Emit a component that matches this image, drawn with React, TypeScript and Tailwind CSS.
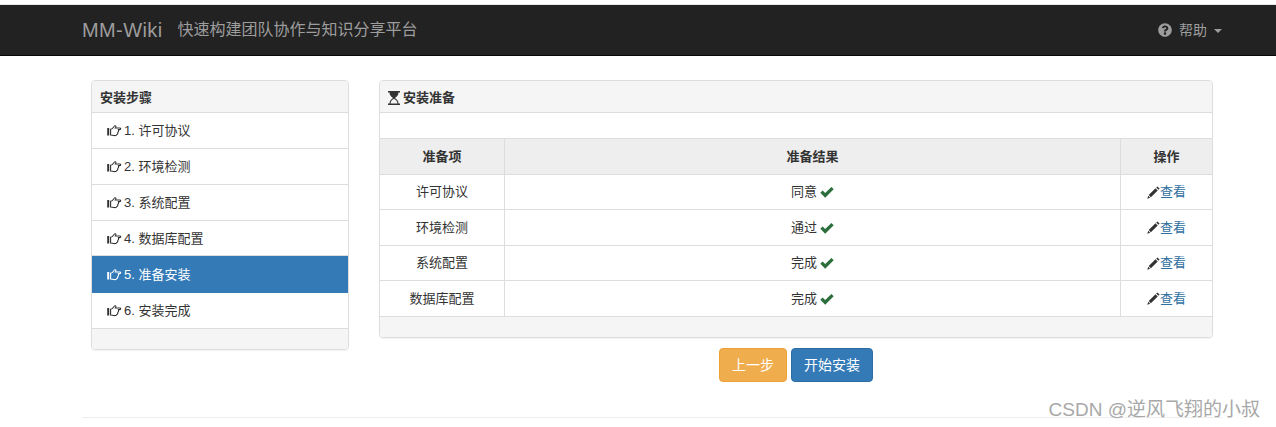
import { FaQuestionCircle } from "react-icons/fa";

const steps = ["1. 许可协议", "2. 环境检测", "3. 系统配置", "4. 数据库配置", "5. 准备安装", "6. 安装完成"];
const rows = [
  ["许可协议", "同意", "h-[35px]"],
  ["环境检测", "通过", "h-[36px]"],
  ["系统配置", "完成", "h-[35px]"],
  ["数据库配置", "完成", "h-[35px]"],
];

function Hourglass() {
  return (
    <svg width="12" height="14" viewBox="0 0 12 14" className="text-[#333]">
      <path fill="currentColor" d="M0 0h12v1.4H0zM0 12.6h12V14H0zM1.5 1.4h9c0 2.8-1.6 4.2-3.6 5.6 2 1.4 3.6 2.8 3.6 5.6H9.4c0-2.2-1.2-3.5-3.4-4.8-2.2 1.3-3.4 2.6-3.4 4.8H1.5c0-2.8 1.6-4.2 3.6-5.6-2-1.4-3.6-2.8-3.6-5.6z" />
    </svg>
  );
}

function Hand() {
  return (
    <svg width="15" height="12" viewBox="0 0 15 12" fill="none" stroke="currentColor" strokeWidth="1.1" className="shrink-0">
      <rect x="0.2" y="3" width="2" height="7.5" fill="currentColor" stroke="none" />
      <path d="M3.6 4.2c1.6 0 2.4-.9 3.1-2.2.5-1 1.3-1.6 1.9-1.1.5.4.3 1.3-.2 2.1h4.4c1.2 0 1.2 1.6 0 1.6h-1.4c.4 1.4-.1 2.4-.6 2.8.2 1-.2 1.7-.9 2-.3.8-1 1.2-2 1.2-1.9 0-3-.6-4.3-.6z" />
    </svg>
  );
}

function Pencil() {
  return (
    <svg width="13" height="13" viewBox="0 0 13 13" className="shrink-0 text-[#333]">
      <path fill="currentColor" d="M10.4 0.4l2.2 2.2-1.2 1.2-2.2-2.2zM8.5 2.3l2.2 2.2-6.8 6.8-2.2-2.2zM1.2 9.8l2 2-2.9.9z" />
    </svg>
  );
}

function Ok() {
  return (
    <svg width="14" height="12" viewBox="0 0 14 12" className="shrink-0 text-[#2c6e3c]">
      <path fill="currentColor" d="M0.3 6.8l2.3-2.3 2.6 2.6L11.4.9l2.3 2.3-8.5 8.5z" />
    </svg>
  );
}

export default function App() {
  return (
    <div className="relative h-[427px] w-[1276px] overflow-hidden bg-white font-['Liberation_Sans','Noto_Sans_CJK_SC',sans-serif] text-[13px] text-[#333]">
      <div className="h-[5px] border-b border-[#e7e7e7]" />
      <nav className="flex h-[51px] items-center border-b border-[#080808] bg-[#222] pl-[82px] pr-[54px] text-[#9d9d9d]">
        <span className="text-[20px] tracking-[0.4px]">MM-Wiki</span>
        <span className="ml-[15px] text-[16px]">快速构建团队协作与知识分享平台</span>
        <div className="ml-auto flex items-center">
          <FaQuestionCircle className="text-[14px]" />
          <span className="ml-[7px] text-[14px]">帮助</span>
          <span className="ml-[7px] mt-[2px] h-0 w-0 border-x-4 border-t-4 border-x-transparent border-t-[#9d9d9d]" />
        </div>
      </nav>

      <div className="flex items-start gap-[30px] pl-[91px] pt-[24px]">
        <section className="w-[258px] overflow-hidden rounded border border-[#ddd] shadow-[0_1px_1px_rgba(0,0,0,0.05)]">
          <h3 className="flex h-[32px] items-center border-b border-[#ddd] bg-[#f5f5f5] pl-2 pt-[2px] font-bold">安装步骤</h3>
          {steps.map((s, i) => (
            <div
              key={s}
              className={
                i === 4
                  ? "flex h-[37px] items-center gap-[2px] bg-[#337ab7] pl-[15px] text-white"
                  : i === 3
                    ? "flex h-[35px] items-center gap-[2px] border-b border-[#ddd] pl-[15px] pt-[1px]"
                    : "flex h-[36px] items-center gap-[2px] border-b border-[#ddd] pl-[15px]"
              }
            >
              <Hand />
              <span>{s}</span>
            </div>
          ))}
          <div className="h-[20px] bg-[#f5f5f5]" />
        </section>

        <div className="w-[834px]">
          <section className="overflow-hidden rounded border border-[#ddd] shadow-[0_1px_1px_rgba(0,0,0,0.05)]">
            <h3 className="flex h-[32px] items-center gap-[3px] border-b border-[#ddd] bg-[#f5f5f5] pl-2 pt-[2px] font-bold">
              <Hourglass />
              安装准备
            </h3>
            <div className="h-[25px]" />
            <div className="grid grid-cols-[125px_616px_1fr] border-y border-[#ddd]">
              {["准备项", "准备结果", "操作"].map((h, i) => (
                <div key={h} className={"flex h-[36px] items-center justify-center border-b border-[#ddd] bg-[#eee] font-bold " + (i < 2 ? "border-r" : "")}>
                  {h}
                </div>
              ))}
              {rows.map(([a, b, h], i) => {
                const line = i < 3 ? "border-b" : "";
                return (
                  <div key={a} className="contents">
                    <div className={"flex items-center justify-center border-r border-[#ddd] " + h + " " + line}>{a}</div>
                    <div className={"flex items-center justify-center gap-[3px] border-r border-[#ddd] " + h + " " + line}>
                      {b}
                      <Ok />
                    </div>
                    <div className={"flex items-center justify-center border-[#ddd] text-[#2f6f9f] " + h + " " + line}>
                      <Pencil />
                      查看
                    </div>
                  </div>
                );
              })}
            </div>
            <div className="h-[20px] bg-[#f5f5f5]" />
          </section>
          <div className="mt-[10px] flex justify-center gap-1">
            <button className="h-[34px] w-[68px] rounded border border-[#eea236] bg-[#f0ad4e] text-[14px] text-white">上一步</button>
            <button className="h-[34px] w-[82px] rounded border border-[#2e6da4] bg-[#337ab7] text-[14px] text-white">开始安装</button>
          </div>
        </div>
      </div>

      <div className="ml-[82px] mt-[35px] w-[1140px] border-t border-[#eee]" />
      <span className="absolute right-[16px] top-[396px] text-[19px] text-[#a8a8a8]">CSDN @逆风飞翔的小叔</span>
    </div>
  );
}
